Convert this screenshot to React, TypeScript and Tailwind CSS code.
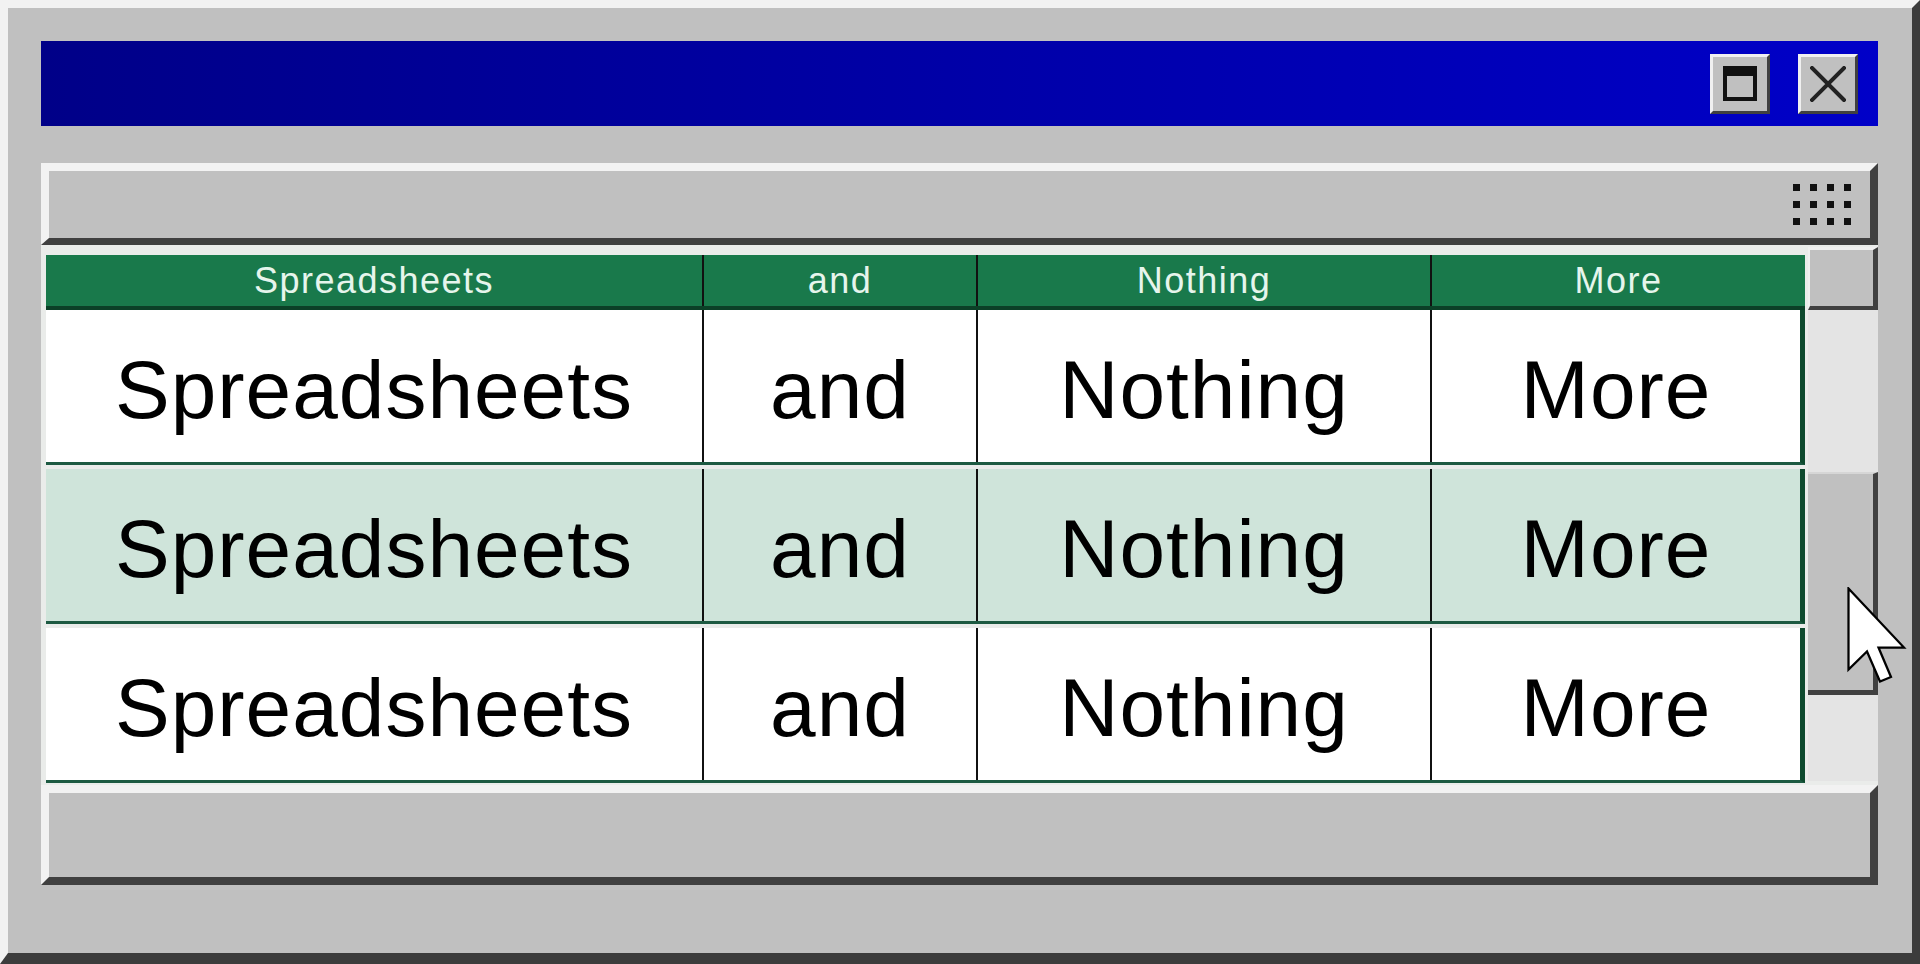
import React from "react";

const cols = [
  { w: "w-[656px]", label: "Spreadsheets", div: false },
  { w: "w-[274px]", label: "and", div: true },
  { w: "w-[454px]", label: "Nothing", div: true },
  { w: "w-[375px]", label: "More", div: true },
];

const rowCols = [
  { w: "w-[656px]", label: "Spreadsheets", div: false },
  { w: "w-[274px]", label: "and", div: true },
  { w: "w-[454px]", label: "Nothing", div: true },
  { w: "w-[370px]", label: "More", div: true },
];

function Row({ highlight, first }: { highlight?: boolean; first?: boolean }) {
  return (
    <div
      className={
        "flex h-[155px] border-b-[3px] border-r-[5px] border-b-[#1d5a42] border-r-[#0e4a2e] " +
        (highlight ? "bg-[#cfe4da] " : "bg-white ") +
        (first ? "" : "mt-[4px]")
      }
    >
      {rowCols.map((c, i) => (
        <div
          key={i}
          className={
            c.w +
            " flex items-center justify-center pt-[8px] text-[82px] leading-none tracking-[1px] text-black " +
            (c.div ? "border-l-[2px] border-l-[#111111]" : "")
          }
        >
          {c.label}
        </div>
      ))}
    </div>
  );
}

export default function App() {
  return (
    <div className="relative flex h-[964px] w-[1920px] flex-col overflow-hidden border-t-[8px] border-l-[8px] border-r-[8px] border-b-[11px] border-t-[#f2f2f2] border-l-[#f2f2f2] border-r-[#3c3c3c] border-b-[#3c3c3c] bg-[#c0c0c0] pt-[33px] pl-[33px] pr-[34px] font-['Liberation_Sans',Arial,sans-serif]">
      {/* Title bar */}
      <div className="flex h-[85px] shrink-0 items-center justify-end gap-[28px] bg-linear-to-r from-[#000088] to-[#0000c8] pr-[20px]">
        <div className="flex h-[60px] w-[60px] items-center justify-center border-[3px] border-t-[#f0f0f0] border-l-[#f0f0f0] border-b-[#404040] border-r-[#404040] bg-[#c0c0c0]">
          <div className="h-[35px] w-[34px] border-[4px] border-t-[10px] border-[#111111]" />
        </div>
        <div className="flex h-[60px] w-[60px] items-center justify-center border-[3px] border-t-[#f0f0f0] border-l-[#f0f0f0] border-b-[#404040] border-r-[#404040] bg-[#c0c0c0]">
          <svg width="36" height="36" viewBox="0 0 36 36">
            <path d="M2 2 L34 34 M34 2 L2 34" stroke="#222222" strokeWidth="4" strokeLinecap="square" />
          </svg>
        </div>
      </div>

      {/* Toolbar */}
      <div className="mt-[37px] flex h-[82px] shrink-0 items-center justify-end border-t-[8px] border-l-[8px] border-r-[8px] border-b-[7px] border-t-[#f2f2f2] border-l-[#f2f2f2] border-r-[#404040] border-b-[#404040] bg-[#c0c0c0] pr-[19px]">
        <div className="grid grid-cols-4 gap-[10px]">
          {Array.from({ length: 12 }).map((_, i) => (
            <div key={i} className="h-[7px] w-[7px] bg-[#111111]" />
          ))}
        </div>
      </div>

      {/* Table */}
      <div className="flex h-[540px] shrink-0 bg-[#eaecea]">
        <div className="flex w-[1764px] flex-col pl-[5px] pt-[10px]">
          <div className="flex h-[55px] border-b-[4px] border-b-[#0b4027] bg-[#19794b]">
            {cols.map((c, i) => (
              <div
                key={i}
                className={
                  c.w +
                  " flex items-center justify-center text-[36px] leading-none tracking-[1.5px] text-[#e6f5ec] " +
                  (c.div ? "border-l-[2px] border-l-[#111111]" : "")
                }
              >
                {c.label}
              </div>
            ))}
          </div>
          <Row first />
          <Row highlight />
          <Row />
        </div>
        <div className="ml-[3px] flex w-[70px] flex-col pt-[2px]">
          <div className="h-[63px] border-t-[3px] border-l-[2px] border-r-[5px] border-b-[4px] border-t-[#f0f0f0] border-l-[#f0f0f0] border-r-[#404040] border-b-[#404040] bg-[#c0c0c0]" />
          <div className="flex h-[471px] flex-col bg-[#e4e4e4]">
            <div className="h-[162px]" />
            <div className="h-[223px] border-t-[2px] border-r-[5px] border-b-[5px] border-t-[#d6d6d6] border-r-[#404040] border-b-[#404040] bg-[#c0c0c0]" />
          </div>
        </div>
      </div>

      {/* Status bar */}
      <div className="h-[100px] shrink-0 border-t-[8px] border-l-[8px] border-r-[8px] border-b-[8px] border-t-[#f2f2f2] border-l-[#f2f2f2] border-r-[#404040] border-b-[#404040] bg-[#c0c0c0]" />

      {/* Cursor */}
      <svg
        className="absolute left-[1839px] top-[579px]"
        width="62"
        height="98"
        viewBox="0 0 12.4 19.6"
      >
        <path
          d="M0.3 0.3 L0.3 16.5 L4 12.9 L6.6 18.9 L8.8 18 L6.3 12.1 L11.4 12.1 Z"
          fill="#ffffff"
          stroke="#000000"
          strokeWidth="0.45"
          strokeLinejoin="miter"
        />
      </svg>
    </div>
  );
}
